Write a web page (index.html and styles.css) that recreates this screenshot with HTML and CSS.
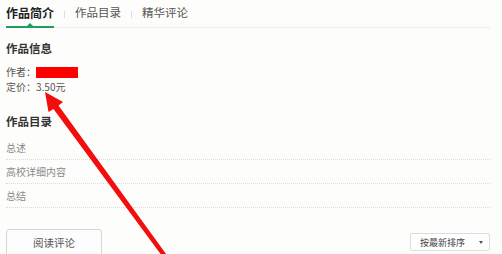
FILE: index.html
```html
<!DOCTYPE html>
<html lang="zh-CN">
<head>
<meta charset="utf-8">
<title>作品简介</title>
<link rel="stylesheet" href="styles.css">
</head>
<body>
<div class="page">
  <nav class="tabs">
    <span class="tab active">作品简介</span>
    <span class="sep"></span>
    <span class="tab">作品目录</span>
    <span class="sep"></span>
    <span class="tab">精华评论</span>
  </nav>

  <section class="info">
    <h3 class="title">作品信息</h3>
    <p class="line">作者：<span class="redact"></span></p>
    <p class="line">定价：3.50元</p>
  </section>

  <section class="catalog">
    <h3 class="title title-cat">作品目录</h3>
    <ul class="rows">
      <li class="row">总述</li>
      <li class="row">高校详细内容</li>
      <li class="row">总结</li>
    </ul>
  </section>

  <div class="footer">
    <button class="btn">阅读评论</button>
    <div class="select"><span>按最新排序</span><span class="caret"></span></div>
  </div>
</div>

<svg class="arrow" width="502" height="254" viewBox="0 0 502 254">
  <polygon fill="#f40d0d" points="45,92 63,102 58.5,105.5 167.5,256 163.5,258 53.5,109 48.5,112"/>
</svg>
</body>
</html>
```

FILE: styles.css
```css
html, body {
  margin: 0;
  padding: 0;
  background: #fdfdfb;
}
body {
  font-family: "Noto Sans CJK SC", "Liberation Sans", sans-serif;
  color: #555;
  position: relative;
  width: 502px;
  height: 254px;
  overflow: hidden;
}
.page {
  width: 484px;
  padding: 0 6px;
  margin-right: 12px;
}
.tabs {
  display: flex;
  align-items: center;
  height: 27px;
  border-bottom: 1px solid #ececec;
  box-sizing: content-box;
}
.tab {
  position: relative;
  font-size: 11.5px;
  line-height: 15px;
  color: #555;
  height: 27px;
  display: flex;
  align-items: center;
  padding-bottom: 3px;
  box-sizing: border-box;
}
.tab.active {
  font-size: 12px;
  font-weight: bold;
  color: #222;
}
.tab.active::after {
  content: "";
  position: absolute;
  left: 0;
  right: 0;
  bottom: -1px;
  height: 2px;
  background: #1f9f5c;
}
.tab.active::before {
  content: "";
  position: absolute;
  left: 50%;
  margin-left: -3px;
  bottom: 1px;
  border-left: 3px solid transparent;
  border-right: 3px solid transparent;
  border-bottom: 3px solid #1f9f5c;
}
.sep {
  width: 1px;
  height: 7px;
  background: #ddd;
  margin: 0 10px 0 10px;
  margin-top: 1px;
}
.title {
  margin: 13px 0 0;
  font-size: 11.5px;
  line-height: 15px;
  font-weight: bold;
  color: #333;
}
.line {
  margin: 0;
  font-size: 10px;
  line-height: 15px;
  color: #555;
}
.title + .line {
  margin-top: 8px;
}
.redact {
  display: inline-block;
  width: 42px;
  height: 11px;
  background: #ff0000;
  vertical-align: -2px;
}
.title-cat {
  margin-top: 20px;
}
.rows {
  list-style: none;
  margin: 7px 0 0;
  padding: 0;
}
.row {
  height: 23px;
  line-height: 23px;
  font-size: 10px;
  color: #8a8a8a;
  border-bottom: 1px dotted #dcdcdc;
}
.footer {
  display: flex;
  justify-content: space-between;
  align-items: flex-start;
  margin-top: 21px;
}
.btn {
  width: 96px;
  height: 30px;
  padding: 0 0 2px;
  border: 1px solid #d6d6d6;
  border-radius: 3px;
  background: #fdfdfd;
  font-family: inherit;
  font-size: 10.5px;
  color: #555;
  line-height: 26px;
}
.select {
  margin-top: 4px;
  width: 80px;
  height: 18px;
  box-sizing: border-box;
  border: 1px solid #dcdcdc;
  border-radius: 2px;
  background: #fff;
  display: flex;
  align-items: center;
  justify-content: space-between;
  padding: 0 6px 0 9px;
  font-size: 9px;
  color: #444;
}
.caret {
  width: 0;
  height: 0;
  border-left: 2px solid transparent;
  border-right: 2px solid transparent;
  border-top: 3px solid #555;
}
.arrow {
  position: absolute;
  left: 0;
  top: 0;
  pointer-events: none;
}
```
